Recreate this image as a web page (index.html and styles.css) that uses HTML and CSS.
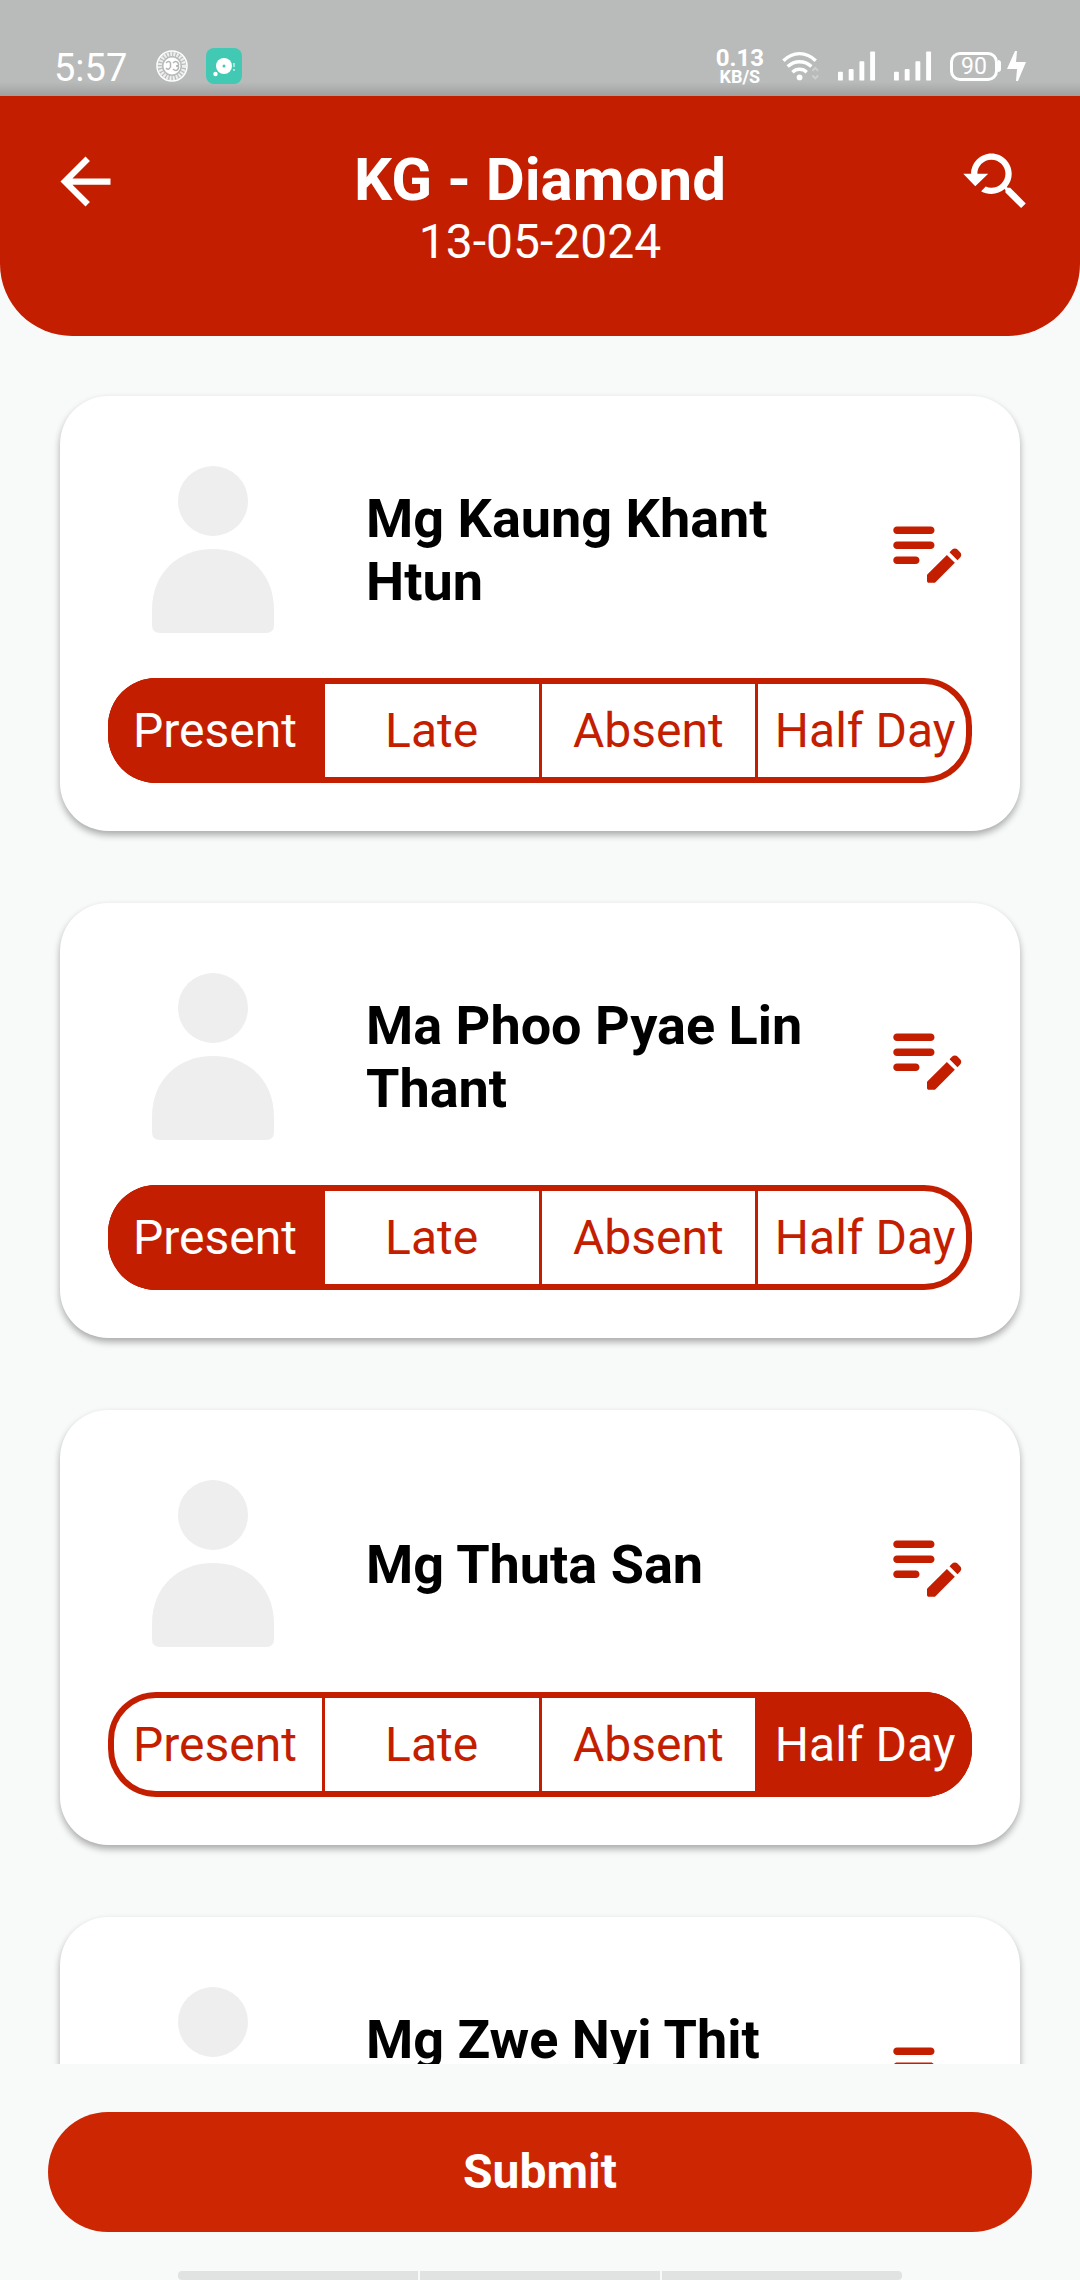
FILE: index.html
```html
<!DOCTYPE html>
<html lang="en">
<head>
<meta charset="utf-8">
<meta name="viewport" content="width=device-width, initial-scale=1">
<title>KG - Diamond attendance</title>
<link rel="stylesheet" href="styles.css">
</head>
<body>
<svg class="sprite" aria-hidden="true">
  <symbol id="person" viewBox="0 0 210 210">
    <circle cx="105" cy="57" r="35"/>
    <path d="M44 166C44 128 71 105 105 105s61 23 61 61v15q0 8-8 8H52q-8 0-8-8z"/>
  </symbol>
  <symbol id="edit" viewBox="0 0 24 24">
    <path d="M14 11c0 .55-.45 1-1 1H4c-.55 0-1-.45-1-1s.45-1 1-1h9c.55 0 1 .45 1 1zM3 7c0 .55.45 1 1 1h9c.55 0 1-.45 1-1s-.45-1-1-1H4c-.55 0-1 .45-1 1zm7 8c0-.55-.45-1-1-1H4c-.55 0-1 .45-1 1s.45 1 1 1h5c.55 0 1-.45 1-1zm8.01-2.13.71-.71c.39-.39 1.02-.39 1.41 0l.71.71c.39.39.39 1.02 0 1.41l-.71.71-2.12-2.12zm-.71.71-5.16 5.16c-.09.09-.14.21-.14.35v1.41c0 .28.22.5.5.5h1.41c.13 0 .26-.05.35-.15l5.16-5.16-2.12-2.11z"/>
  </symbol>
  <symbol id="signal" viewBox="0 0 39 30">
    <rect x="0" y="21" width="5" height="9" rx="1"/>
    <rect x="11" y="18" width="5" height="12" rx="1"/>
    <rect x="22" y="10" width="5" height="20" rx="1"/>
    <rect x="33" y="0" width="5" height="30" rx="1"/>
  </symbol>
</svg>

<div class="status">
  <div class="status-side status-left">
    <span class="time">5:57</span>
    <svg class="seal" viewBox="0 0 32 32" fill="none" stroke="#fff" aria-hidden="true">
      <circle cx="16" cy="16" r="15" stroke-width="1.5"/>
      <circle cx="16" cy="16" r="12" stroke-width="4" stroke-dasharray="2 1.2" opacity=".75"/>
      <circle cx="16" cy="16" r="8.5" fill="#fff" stroke="none"/>
      <path d="M10 13q3-3 4.500 0v4q-2 4-4.500 1M17 13q3-3 5 0t-2 3q4 0 2 3t-5 0" stroke="#b4b6b5" stroke-width="1.5"/>
    </svg>
    <svg class="app" viewBox="0 0 36 36" aria-hidden="true">
      <rect width="36" height="36" rx="8" fill="#41c9b4"/>
      <circle cx="18" cy="18" r="8" fill="#fff"/>
      <circle cx="18" cy="18" r="1.5" fill="#41c9b4"/>
      <circle cx="9.5" cy="26" r="2.2" fill="#fff"/>
      <path d="M28 15v4M28 21v2" stroke="#fff" stroke-width="1.5" opacity=".7"/>
    </svg>
  </div>
  <div class="status-side status-right">
    <span class="speed"><b>0.13</b><small>KB/S</small></span>
    <svg class="wifi" viewBox="0 0 40 30" fill="none" stroke="#fff" stroke-width="3.6" aria-hidden="true">
      <path d="M1.500 9.500Q9 2 18.500 2t17 7.500M6 15.500q5.500-5 12.500-5t12.500 5M11 21.500q3-3 7.500-3t7.500 3"/>
      <circle cx="18.5" cy="27" r="3" fill="#fff" stroke="none"/>
      <path d="m32 20 3-3 3 3M32 25l3 3 3-3" stroke-width="2" opacity=".3"/>
    </svg>
    <svg class="bars" aria-hidden="true"><use href="#signal"/></svg>
    <svg class="bars" aria-hidden="true"><use href="#signal"/></svg>
    <span class="power">
      <span class="battery">90</span>
      <span class="nub"></span>
      <svg class="bolt" viewBox="0 0 19 31" aria-hidden="true"><path d="M8 0h2l-1 11h10l-8 19H9l1-12H0z"/></svg>
    </span>
  </div>
</div>

<header class="header">
  <button class="icon-button" type="button" aria-label="Back">
    <svg viewBox="0 0 24 24"><path d="M20 11H7.830l5.590-5.590L12 4l-8 8 8 8 1.410-1.410L7.830 13H20v-2z"/></svg>
  </button>
  <div class="heading">
    <h1>KG - Diamond</h1>
    <p>13-05-2024</p>
  </div>
  <button class="icon-button" type="button" aria-label="Search history">
    <svg viewBox="0 0 24 24"><path d="M17.010 14h-.8l-.27-.27c.98-1.140 1.570-2.610 1.570-4.230 0-3.590-2.910-6.500-6.500-6.500s-6.500 3-6.500 6.500H2l3.840 4 4.160-4H6.510C6.510 7 8.530 5 11.010 5s4.500 2.010 4.500 4.500c0 2.480-2.020 4.500-4.500 4.500-.65 0-1.260-.14-1.820-.38L7.710 15.100c.97.57 2.090.9 3.300.9 1.610 0 3.080-.59 4.220-1.570l.27.27v.79l5.010 4.990L22 19l-4.990-5z"/></svg>
  </button>
</header>

<main class="list">
  <article class="card">
    <div class="student">
      <svg class="avatar" aria-hidden="true"><use href="#person"/></svg>
      <h2>Mg Kaung Khant Htun</h2>
      <button class="edit" type="button" aria-label="Edit note"><svg><use href="#edit"/></svg></button>
    </div>
    <div class="choices" role="radiogroup" aria-label="Attendance">
      <label><input type="radio" name="s1" checked><span>Present</span></label>
      <label><input type="radio" name="s1"><span>Late</span></label>
      <label><input type="radio" name="s1"><span>Absent</span></label>
      <label><input type="radio" name="s1"><span>Half Day</span></label>
    </div>
  </article>
  <article class="card">
    <div class="student">
      <svg class="avatar" aria-hidden="true"><use href="#person"/></svg>
      <h2>Ma Phoo Pyae Lin Thant</h2>
      <button class="edit" type="button" aria-label="Edit note"><svg><use href="#edit"/></svg></button>
    </div>
    <div class="choices" role="radiogroup" aria-label="Attendance">
      <label><input type="radio" name="s2" checked><span>Present</span></label>
      <label><input type="radio" name="s2"><span>Late</span></label>
      <label><input type="radio" name="s2"><span>Absent</span></label>
      <label><input type="radio" name="s2"><span>Half Day</span></label>
    </div>
  </article>
  <article class="card">
    <div class="student">
      <svg class="avatar" aria-hidden="true"><use href="#person"/></svg>
      <h2>Mg Thuta San</h2>
      <button class="edit" type="button" aria-label="Edit note"><svg><use href="#edit"/></svg></button>
    </div>
    <div class="choices" role="radiogroup" aria-label="Attendance">
      <label><input type="radio" name="s3"><span>Present</span></label>
      <label><input type="radio" name="s3"><span>Late</span></label>
      <label><input type="radio" name="s3"><span>Absent</span></label>
      <label><input type="radio" name="s3" checked><span>Half Day</span></label>
    </div>
  </article>
  <article class="card">
    <div class="student">
      <svg class="avatar" aria-hidden="true"><use href="#person"/></svg>
      <h2>Mg Zwe Nyi Thit<br>&nbsp;</h2>
      <button class="edit" type="button" aria-label="Edit note"><svg><use href="#edit"/></svg></button>
    </div>
  </article>
</main>

<footer class="footer">
  <button class="submit" type="button">Submit</button>
</footer>
<div class="gesture" aria-hidden="true"><i></i><i></i><i></i></div>
</body>
</html>
```

FILE: styles.css
```css
:root {
  --red: #c41e00;
  --page: #f8faf9;
}

* {
  box-sizing: border-box;
}

body {
  margin: 0;
  height: 100vh;
  display: flex;
  flex-direction: column;
  position: relative;
  overflow: hidden;
  background: var(--page);
  color: #000;
  font-family: Roboto, "Liberation Sans", sans-serif;
}

h1, h2, p {
  margin: 0;
}

button {
  border: 0;
  padding: 0;
  background: none;
  font-family: inherit;
  cursor: pointer;
}

svg {
  display: block;
}

.sprite {
  position: absolute;
  width: 0;
  height: 0;
}

/* Status bar */
.status {
  flex: none;
  height: 96px;
  padding: 36px 54px 0;
  display: flex;
  justify-content: space-between;
  background: linear-gradient(#b9bbba 82px, #9f9f9f 96px);
  color: #fff;
}

.status-side {
  height: 60px;
  display: flex;
  align-items: center;
}

.status-left {
  gap: 18px;
}

.status-right {
  gap: 18px;
}

.time {
  width: 84px;
  font-size: 38px;
  line-height: 60px;
  padding-top: 4px;
}

.seal {
  width: 32px;
  height: 32px;
}

.app {
  width: 36px;
  height: 36px;
}

.speed {
  display: flex;
  flex-direction: column;
  align-items: center;
}

.speed b {
  font-size: 24px;
  line-height: 22px;
}

.speed small {
  font-size: 18px;
  line-height: 16px;
  font-weight: 700;
}

.wifi {
  width: 38px;
  height: 30px;
}

.bars {
  width: 38px;
  height: 30px;
  fill: #fff;
}

.power {
  display: flex;
  align-items: center;
}

.battery {
  width: 48px;
  height: 29px;
  border: 3px solid #fff;
  border-radius: 10px;
  font-size: 23px;
  line-height: 23px;
  text-align: center;
}

.nub {
  width: 3px;
  height: 12px;
  border-radius: 0 3px 3px 0;
  background: #fff;
}

.bolt {
  width: 19px;
  height: 31px;
  margin-left: 6px;
  fill: #fff;
}

/* Header */
.header {
  flex: none;
  height: 240px;
  padding: 48px;
  display: flex;
  align-items: flex-start;
  justify-content: space-between;
  border-radius: 0 0 72px 72px;
  background: var(--red);
  color: #fff;
}

.icon-button {
  width: 75px;
  height: 75px;
}

.icon-button svg {
  width: 100%;
  height: 100%;
  fill: #fff;
}

.heading {
  text-align: center;
}

.heading h1 {
  font-size: 60px;
  line-height: 72px;
  font-weight: 700;
}

.heading p {
  font-size: 48px;
  line-height: 51px;
}

/* Student list */
.list {
  flex: 1;
  min-height: 0;
  overflow-y: auto;
  scrollbar-width: none;
  padding: 60px 60px 0;
  display: flex;
  flex-direction: column;
  gap: 72px;
}

.card {
  flex: none;
  padding: 48px;
  border-radius: 48px;
  background: #fff;
  box-shadow: 0 4px 7px rgba(0, 0, 0, .32);
}

.student {
  display: flex;
  align-items: center;
}

.student h2 {
  flex: 1;
  margin: 0 48px;
  padding-top: 2px;
  font-size: 54px;
  line-height: 63px;
  font-weight: 700;
}

.avatar {
  width: 210px;
  height: 210px;
  fill: #eee;
}

.edit svg {
  width: 90px;
  height: 90px;
  fill: var(--red);
}

/* Attendance choices */
.choices {
  position: relative;
  height: 105px;
  margin-top: 24px;
  display: grid;
  grid-template-columns: repeat(4, 1fr);
  gap: 3px;
  overflow: hidden;
  border-radius: 48px;
  background: var(--red);
}

.choices::after {
  content: "";
  position: absolute;
  inset: 0;
  border: 6px solid var(--red);
  border-radius: 48px;
  pointer-events: none;
}

.choices label {
  position: relative;
  display: flex;
  cursor: pointer;
}

.choices input {
  position: absolute;
  inset: 0;
  margin: 0;
  opacity: 0;
}

.choices span {
  flex: 1;
  background: #fff;
  color: var(--red);
  font-size: 48px;
  line-height: 105px;
  text-align: center;
  white-space: nowrap;
}

.choices input:checked + span {
  background: var(--red);
  color: #fff;
}

/* Footer */
.footer {
  flex: none;
  padding: 48px;
  display: flex;
}

.submit {
  flex: 1;
  height: 120px;
  border-radius: 60px;
  background: #cd2602;
  color: #fff;
  font-size: 48px;
  line-height: 56px;
  font-weight: 700;
}

.gesture {
  position: absolute;
  left: 0;
  right: 0;
  bottom: 0;
  width: 67%;
  height: 9px;
  margin: 0 auto;
  display: flex;
  gap: 2px;
  overflow: hidden;
  border-radius: 4px;
}

.gesture i {
  flex: 1;
  background: #e1e3e2;
}
```
